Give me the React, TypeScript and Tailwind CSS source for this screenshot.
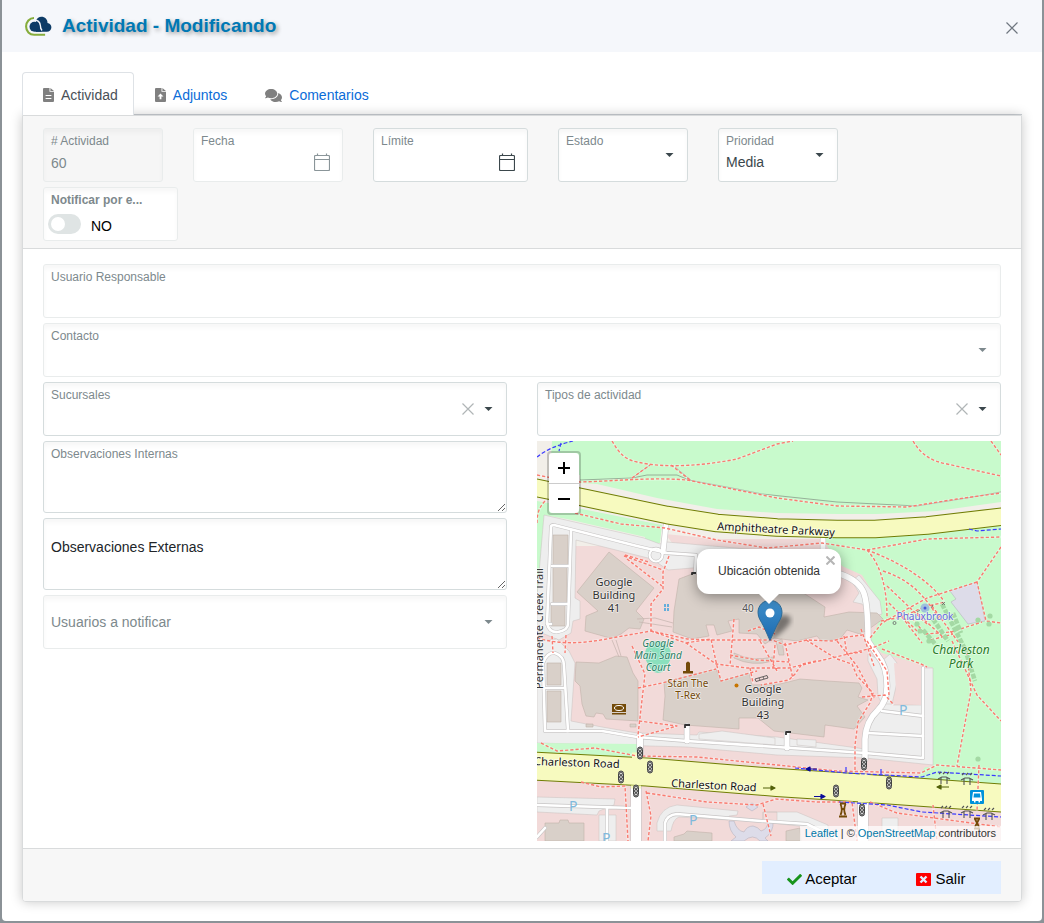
import type { ReactNode } from "react";
import { FaCheck, FaComments } from "react-icons/fa";

const labelText = "text-xs leading-4 text-[#7d898d]";

function Caret({ muted = false }: { muted?: boolean }) {
  return (
    <svg
      aria-hidden="true"
      viewBox="0 0 9 5"
      className={`pointer-events-none absolute top-1/2 right-[13px] h-[5px] w-[9px] -translate-y-1/2 ${muted ? "text-[#7d898d]" : "text-[#3b474c]"}`}
    >
      <path d="M0.5 0.5h8l-4 4z" fill="currentColor" />
    </svg>
  );
}

type BoxProps = { children: ReactNode; className?: string; soft?: boolean; disabled?: boolean };

function Box({ children, className = "h-[54px]", soft = false, disabled = false }: BoxProps) {
  return (
    <div
      className={`relative flex flex-col overflow-hidden rounded-[3px] border px-[7px] pt-1 shadow-[inset_0_4px_4px_rgba(0,0,0,0.03)] ${
        soft ? "border-[#e9ecec]" : "border-[#d5dcdd]"
      } ${disabled ? "bg-[#f6f6f6]" : "bg-white"} ${className}`}
    >
      {children}
    </div>
  );
}

function CalendarIcon() {
  return (
    <svg aria-hidden="true" viewBox="0 0 16 18" className="h-[18px] w-4" fill="none" stroke="currentColor" strokeWidth="1.200">
      <path d="M1.5 2.5h13a1 1 0 0 1 1 1v13a1 1 0 0 1-1 1h-13a1 1 0 0 1-1-1v-13a1 1 0 0 1 1-1zM0.5 6.5h15M3.5 0.5v2M12.5 0.5v2" />
    </svg>
  );
}

function DateField({ id, label, className, soft = false }: { id: string; label: string; className: string; soft?: boolean }) {
  return (
    <Box className={`h-[54px] ${className}`} soft={soft}>
      <label htmlFor={id} className={labelText}>{label}</label>
      <div className="flex h-[26px] items-center justify-between pr-[5px]">
        <input id={id} type="text" className="w-0 flex-1 text-sm text-[#3b474c] outline-none" />
        <button type="button" aria-label={`Abrir calendario: ${label}`} className={soft ? "text-[#8a9599]" : "text-[#3b474c]"}>
          <CalendarIcon />
        </button>
      </div>
    </Box>
  );
}

type SelectProps = { id: string; label: string; value?: string; className?: string; soft?: boolean; clearable?: boolean };

function SelectField({ id, label, value = "", className = "", soft = false, clearable = false }: SelectProps) {
  return (
    <Box className={`h-[54px] ${className}`} soft={soft}>
      <label htmlFor={id} className={labelText}>{label}</label>
      <select id={id} defaultValue={value} className="h-[26px] w-full appearance-none text-sm text-[#3b474c] outline-none">
        <option value={value}>{value}</option>
      </select>
      {clearable && (
        <button type="button" aria-label={`Limpiar ${label}`} className="absolute top-1/2 right-8 -translate-y-1/2 text-[#b0b5b7]">
          <svg aria-hidden="true" viewBox="0 0 12 12" className="size-3" stroke="currentColor" strokeWidth="1.2">
            <path d="M0.5 0.5l11 11M11.5 0.5l-11 11" />
          </svg>
        </button>
      )}
      <Caret muted={soft} />
    </Box>
  );
}

function Logo() {
  return (
    <svg aria-hidden="true" viewBox="0 0 27 20" className="h-5 w-[27px]">
      <path d="M9 2C4.500 2 1.100 5.800 1.100 10.500c0 5 3.500 8.300 8 8.300h11" fill="none" stroke="#86ad3c" strokeWidth="2.100" />
      <path d="M11 4.500C12 2.200 14 0.800 16.400 0.800c3.600 0 6.200 2.700 6.100 6.100 2.400.3 3.900 2 3.900 4.300 0 2.700-2 4.600-4.600 4.600H11z" fill="#0d3b66" />
      <path d="M8.500 4.400Q15 3.800 15.300 9.500Q15.500 13 17 14.500" fill="none" stroke="#f5f7fb" strokeWidth="1.500" />
      <circle cx="9.500" cy="10.800" r="5" fill="#0d3b66" />
      <path d="M10 15.800h6.500l-2.500-4z" fill="#0d3b66" />
    </svg>
  );
}

function FileIcon({ upload = false }: { upload?: boolean }) {
  return (
    <svg aria-hidden="true" viewBox="0 0 11 14" className="h-3.5 w-[11px]">
      <path d="M1 0h5.500v3.800H11V13a1 1 0 0 1-1 1H1a1 1 0 0 1-1-1V1a1 1 0 0 1 1-1zM7.400 0L11 3.100H7.400z" fill="#808080" />
      {upload ? (
        <path d="M5.500 5.500L2.500 8.600h2.100v2.700h1.800V8.600h2.100z" fill="#fff" />
      ) : (
        <path d="M2.600 7.500h5.800M2.600 10.500h5.800" stroke="#fff" />
      )}
    </svg>
  );
}

const footpaths = [
  "M75 0C80 8 85 18 100 21C130 28 170 24 200 18L240 3L256 0",
  "M376 0C385 15 395 20 410 23L464 35",
  "M454 0L464 14",
  "M0 34L20 38L43 41C80 40 115 36 150 39L200 49L240 57L300 65L370 66L420 58L464 52",
  "M95 37L113 24M134 24L153 39",
  "M8 60C2 66 0 73 0 82",
  "M38 72L84 83L128 87L180 99L230 107L285 102L330 109L390 98L464 96",
  "M330 109C345 125 350 150 350 176M330 109C360 120 390 137 407 160",
  "M346 130C370 138 385 150 402 178M350 145L390 183M352 162L382 192",
  "M464 106L440 141L449 180L464 182M440 141L390 157L345 182L333 197",
  "M87 115L126 129M90 118L125 145M88 114L112 121M132 115L126 131L126 148L114 163L114 190",
  "M0 197C30 206 60 200 80 196L114 190L150 198L174 199L205 199L235 199L248 204L270 199L295 200L310 196L325 194",
  "M114 190L149 202L179 223L210 227L252 227L295 217L335 207L352 200M149 202L174 198L180 225L184 240L220 230",
  "M197 178L193 225M193 214L220 219L252 221M238 204L236 227M248 202L256 238M213 227L216 242",
  "M269 199L300 218L315 223L320 235L336 252L333 262L321 281L318 304L318 330",
  "M95 205L108 233L101 294M101 247L125 242L179 228",
  "M102 280L140 285L101 296M4 302L20 310L58 307L100 315L160 316L230 323L300 330L384 332L400 324L464 329",
  "M15 195L16 212M29 194L28 212",
  "M44 341L64 346L88 345L91 400M109 350L114 375L111 400M110 352L170 361L220 364L239 358L280 361L315 361L320 400",
  "M344 180L365 176L387 166L408 161M365 176L385 202M380 172L408 198M395 165L430 213L434 250L420 325",
  "M330 200L350 230L352 254M300 200L320 225L337 257M325 256L348 254L357 264",
  "M375 177L388 193L414 191L445 181M394 199L416 193",
  "M345 208L384 223L390 226M415 200L440 254L464 280",
  "M442 324L440 370M396 364L400 400M333 361L360 372L464 386M226 363L234 395",
  "M211 190L222 186L238 193",
  "M223 200L240 230L240 227M279 220L265 223L258 233L252 239L224 244",
  "M307 195L310 213L325 211M324 188L330 205L337 225",
];

const buildings = [
  "M72 111L117 147L99 170L107 178L103 188L92 187L84 193L78 196L73 197L48 190L49 175L61 170L40 151Z",
  "M142 138L155 133L240 140L268 153L288 166L287 176L312 171L340 172L346 178L332 188L323 193L310 189L303 198L284 200L280 195L260 200L237 197L228 203L220 193L202 192L202 178L191 180L195 190L180 194L177 184L169 184L172 195L155 198L136 191L137 170Z",
  "M127 241L179 228L184 240L212 232L215 244L243 243L263 238L290 240L322 242L325 247L321 256L331 259L320 265L328 276L317 288L288 284L287 296L237 290L221 277L202 277L202 288L148 284L126 279L128 255Z",
  "M39 221L62 222L79 215L90 216L96 232L101 240L101 280L69 278L66 273L59 272L57 276L49 275L45 263L43 245L38 240Z",
  "M8 382L22 382L23 379L31 379L32 382L47 382L47 400L8 400Z",
  "M137 400V396L147 393L150 390L175 392V400Z",
  "M16 94H31V124H16ZM16 126H30V162H16ZM14 164H28V185H14Z",
  "M10 222H24V244H10ZM10 250H24V281H10Z",
  "M249 390L263 387L264 400H249ZM197 212Q215 221 236 216V220Q215 226 197 217Z",
  "M239 200L242 214H247L245 198Z",
  "M49 283H56V286H49ZM93 283H99V286H93Z",
];

const serviceRoads = [
  "M14 183L10 183L14 86Q14 84 17 84L100 105L130 112L159 114L158 132",
  "M10 182Q12 192 21 191Q31 189 31 183L34 90",
  "M15 125H32M15 163H31",
  "M8 290L6 222Q10 211 18 212Q27 215 27 225L31 290L8 290M7 247H27",
  "M30 290L65 290L100 296L150 300L240 306L328 312L386 317V227",
  "M331 292L386 295M345 270L386 275",
  "M0 364L95 367M70 367V400M128 400V382Q130 374 140 373L224 380L270 383L300 398",
  "M0 396L8 387",
];

const treeRows = "M386 189L399 204M396 178L411 200M405 163L428 208M428 208L438 240M416 172L424 192";

const trees: [number, number][] = [
  [441, 179], [453, 175], [452, 183], [441, 318], [380, 183], [383, 190], [392, 200],
];

const signals: [number, number][] = [
  [103, 312], [113, 326], [84, 336], [99, 350], [327, 323], [299, 350], [352, 342], [325, 369],
];

const shelters: [number, number][] = [
  [407, 338], [430, 339], [409, 372], [430, 372], [452, 374],
];

function Halo({ x, y, size = 11, fill = "#333", children, transform, italic = false, start = false }: {
  x: number; y: number; size?: number; fill?: string; children: ReactNode; transform?: string; italic?: boolean; start?: boolean;
}) {
  return (
    <text
      x={x}
      y={y}
      fontSize={size}
      fill={fill}
      stroke="#fff"
      strokeOpacity="0.6"
      strokeWidth="1.600"
      paintOrder="stroke"
      textAnchor={start ? "start" : "middle"}
      fontStyle={italic ? "italic" : "normal"}
      transform={transform}
    >
      {children}
    </text>
  );
}

function MapDrawing() {
  return (
    <svg
      role="img"
      aria-label="Mapa de la ubicación"
      viewBox="0 0 464 400"
      preserveAspectRatio="xMidYMid slice"
      className="h-full w-full font-['Noto_Sans',sans-serif]"
      strokeLinejoin="round"
    >
      <rect width="464" height="400" fill="#f2dad9" />
      <path d="M0 0H464V105H0Z" fill="#f2efe9" />
      <path d="M15 0H464V61L400 70L340 73L300 73L240 72L180 68L120 57L60 43L43 42V34L12 34L14 16Z" fill="#c8facc" />
      <path d="M0 60L45 68L125 84L123 102L108 102V96L30 78L7 74L6 120L0 155Z" fill="#c8facc" />
      <path d="M128 93L180 98L290 98V120H150Z" fill="#f2dad9" />
      <path d="M287 96L464 84V346L396 338V227L345 212L333 199L344 176L343 163L325 134L305 125L290 105Z" fill="#c8facc" />
      <path d="M388 326L464 334V343L380 337Z" fill="#c8facc" />

      <g fill="#eee" stroke="#c8c0be" strokeWidth="0.500">
        <path d="M7 74L107 97L123 103L130 101L232 110V118L168 118V126L155 127L131 129L115 118L39 99L38 157L43 160V178L36 180L34 192L22 199L0 190V155Z" />
        <path d="M0 200L20 198L32 210L38 222L34 280L65 286L100 292L160 294L162 291L240 296L328 308L330 282L346 265L352 252L357 264L384 264V227H396V324L328 317L240 314L150 306L0 302Z" />
        <path d="M322 134L343 160L345 173L333 176L330 170L325 163L316 161L322 152L315 140Z" />
        <path d="M331 213L345 220L353 213L360 222L361 237L355 263L345 263L341 255L340 238L331 220Z" />
        <path d="M0 356L78 358L77 364L62 370L60 374L0 371ZM62 374H79V400H62ZM120 382Q124 366 140 364L201 370L200 374L192 375L191 379L142 376Q136 378 134 390H120ZM226 371L260 371L291 384V398L270 386L226 381ZM345 377H361V400H345ZM226 371V380H240V371Z" />
        <path d="M185 290L162 293V298L238 304V297ZM260 298L279 299V306L260 304Z" />
      </g>
      <path d="M0 302L100 303V317L0 312Z" fill="#c8facc" />
      <path d="M357 222L384 225V264L360 262Z" fill="#f2dad9" />
      <g fill="#d9d0c9" stroke="#c1b2a9" strokeWidth="0.600">
        {buildings.map((d) => <path key={d} d={d} />)}
      </g>
      <g fill="#dddce9" stroke="#b7b3c0" strokeWidth="0.600">
        <path d="M413 150L440 141L448 180L431 183L414 161L419 158Z" />
        <path d="M192 380H197Q200 390 207 391Q210 385 216 385Q221 386 224 390Q231 388 231 380H236Q237 391 228 397L231 400H223Q216 392 207 400H194L199 396Q192 390 192 380Z" />
        <path d="M209 366L215 362L221 366L215 370Z" />
      </g>
      <ellipse cx="121" cy="214" rx="13" ry="14" fill="#8ae0bd" />
      <circle cx="121" cy="223" r="9" fill="#8ae0bd" />

      {[{ stroke: "#c7c5c5", add: 1.2 }, { stroke: "#fff", add: 0 }].map(({ stroke, add }) => (
        <g key={stroke} fill="none" stroke={stroke} strokeLinecap="round">
          {serviceRoads.map((d) => <path key={d} d={d} strokeWidth={2.600 + add} />)}
          <circle cx="119" cy="114" r="6.500" strokeWidth={2.200 + add} />
          <path d="M129 84L126 111M286 98V125M150 285V300M250 292V307" strokeWidth={5 + add} />
          <path d="M300 132Q320 138 326 150Q331 160 331 200L341 215Q350 225 350 245Q350 260 341 269Q329 280 328 298V318" strokeWidth={5.500 + add} />
          <path d="M103 295V315" strokeWidth={6 + add} />
          <path d="M99 345V402M326 355V402" strokeWidth={10 + add} />
        </g>
      ))}

      <g fill="none" stroke="#8a9d8b" strokeWidth="0.800">
        <path d="M43 39L95 37L113 24M95 37L110 34L140 34L152 39L200 48L225 53L300 61L380 65L430 57L464 51M138 26L155 40" />
        <path d="M100 178L118 177L136 182M102 181L135 186M75 199L82 216M79 199L84 215" stroke="#c9b8b3" />
      </g>

      <g fill="none" strokeLinejoin="round">
        <path d="M-5 46L44 56L130 74L180 82L240 86.500L300 88L338 88L390 84.500L470 75" stroke="#707d05" strokeWidth="18.500" />
        <path d="M-5 46L44 56L130 74L180 82L240 86.500L300 88L338 88L390 84.500L470 75" stroke="#f7fabf" strokeWidth="16.500" />
        <path d="M-5 325L110 331L240 341.500L310 346L470 357.500" stroke="#707d05" strokeWidth="29" />
        <path d="M-5 325L110 331L240 341.500L310 346L470 357.500" stroke="#f7fabf" strokeWidth="27" />
        <path d="M99 311.500V318M327 333V340" stroke="#f7fabf" strokeWidth="8" />
      </g>
      <path d="M94 346H104M321 360H332" stroke="#f7fabf" strokeWidth="3" />

      <g fill="none" stroke="#fff" strokeOpacity="0.350" strokeWidth="2.600">
        {footpaths.map((d) => <path key={d} d={d} />)}
      </g>
      <g fill="none" stroke="#fa7b70" strokeWidth="1.400" strokeDasharray="3.200 2">
        {footpaths.map((d) => <path key={d} d={d} />)}
      </g>
      <g fill="none" stroke="#3a3aff" strokeWidth="1.200" strokeDasharray="4 2">
        <path d="M0 16Q12 6 36 0M24 2L22 10M432 88L440 90L464 88" />
        <path d="M258 327L310 332L385 336L400 331L464 335M302 361L350 364L385 371L464 376" />
        <path d="M309 326V331M344 328V333" strokeDasharray="none" />
      </g>

      <path d={treeRows} fill="none" stroke="#a4d9a4" strokeWidth="4.500" strokeDasharray="5 1.500" />
      <g fill="#a4d9a4">
        {trees.map(([x, y]) => <circle key={`${x}-${y}`} cx={x} cy={y} r="2.600" />)}
      </g>
      <circle cx="388" cy="167" r="4.500" fill="#9fbfdc" />
      <circle cx="388" cy="167" r="1.500" fill="#4456d8" />
      <g fill="none" stroke="#666" strokeWidth="0.800">
        <path d="M380 171l3-2M394 167l2-3M405 161l3 3M405 164l3-3M356 182a1.500 1.500 0 1 0 3 0a1.500 1.500 0 1 0-3 0" />
        <path d="M218 238L230 234.500L231 237L219 240.500ZM222 237l1 2M226 236l1 2" stroke="#444" />
      </g>

      <g fill="#d6d6d6" stroke="#444" strokeWidth="1">
        {signals.map(([x, y]) => (
          <g key={`${x}-${y}`}>
            <rect x={x - 2.500} y={y - 6} width="5" height="12" rx="2.500" />
            <circle cx={x} cy={y - 3.500} r="1.500" />
            <circle cx={x} cy={y} r="1.500" />
            <circle cx={x} cy={y + 3.500} r="1.500" />
          </g>
        ))}
      </g>
      <g fill="none" stroke="#555" strokeWidth="1.100">
        {shelters.map(([x, y]) => (
          <path key={`${x}-${y}`} d={`M${x - 6} ${y}L${x - 2} ${y - 2}H${x + 2}L${x + 6} ${y}M${x - 3} ${y - 1}V${y + 5}M${x + 3} ${y - 1}V${y + 5}M${x - 5} ${y - 5}l2 -2M${x - 1} ${y - 5}l2 -2M${x + 3} ${y - 5}l2 -2`} />
        ))}
      </g>

      <g strokeWidth="1.200">
        <path d="M226 347H237M234 345L238 347L234 349Z" stroke="#53610a" fill="#53610a" />
        <path d="M401 346H412M404 344L400 346L404 348Z" stroke="#53610a" fill="#53610a" />
        <path d="M270 328H280M273 326L269 328L273 330Z" stroke="#0a0a99" fill="#0a0a99" />
        <path d="M277 355.500H288M284 353.500L288 355.500L284 357.500Z" stroke="#0a0a99" fill="#0a0a99" />
        <path d="M155 134V132H159M148 287V284H153M249 294V291H254" stroke="#333" strokeWidth="1.800" fill="none" />
      </g>

      <g fill="#734a08">
        <path d="M149 222Q151 219 153 222V230H156V232.500H146V230H149Z" />
        <path d="M75 263H89V271H75ZM75 272H89V273.500H75Z" />
      </g>
      <ellipse cx="82" cy="267" rx="4.500" ry="2.500" fill="none" stroke="#fff" />
      <g fill="none" stroke="#734a08" strokeWidth="1.100">
        <path d="M303 362.500H309M303.500 363Q306 369 303.500 374M308.500 363Q306 369 308.500 374M302 375.500H310M304 368H308" strokeWidth="1.800" />
        <path d="M437 377.500H443M438 378L442 386M442 378L438 386M437 387.500H443" strokeWidth="1.800" />
      </g>
      <circle cx="199.500" cy="244.500" r="2" fill="#c77400" />
      <path d="M127 163h2v3h-2zM130 163h2v3h-2zM127 167h2v3h-2zM130 167h2v3h-2z" fill="#65aedb" />

      <rect x="433" y="349" width="14" height="14" rx="1" fill="#0092da" />
      <path d="M436 351H444L445 358V360H443V361.500H441.500V360H438.500V361.500H437V360H435V358Z" fill="#fff" />
      <path d="M437 352.500H443L443.500 356.500H436.500Z" fill="#0092da" />

      <Halo x={77} y={145}>Google</Halo>
      <Halo x={77} y={158}>Building</Halo>
      <Halo x={77} y={171}>41</Halo>
      <Halo x={226} y={252}>Google</Halo>
      <Halo x={226} y={265}>Building</Halo>
      <Halo x={226} y={278}>43</Halo>
      <Halo x={211} y={171} size={10} fill="#555">40</Halo>
      <Halo x={121} y={206} size={10} fill="#2a8064" italic>Google</Halo>
      <Halo x={121} y={218} size={10} fill="#2a8064" italic>Main Sand</Halo>
      <Halo x={121} y={230} size={10} fill="#2a8064" italic>Court</Halo>
      <Halo x={151} y={246} size={10} fill="#734a08">Stan The</Halo>
      <Halo x={151} y={258} size={10} fill="#734a08">T-Rex</Halo>
      <Halo x={388} y={179} size={10} fill="#6668dc">Phauxbrook</Halo>
      <Halo x={424} y={213} size={12} fill="#277c27" italic>Charleston</Halo>
      <Halo x={424} y={227} size={12} fill="#277c27" italic>Park</Halo>
      <Halo x={180} y={89} fill="#111" start transform="rotate(3 180 89)">Amphitheatre Parkway</Halo>
      <Halo x={-3} y={324} fill="#111" start transform="rotate(2 -3 324)">Charleston Road</Halo>
      <Halo x={134} y={346} fill="#111" start transform="rotate(3 134 346)">Charleston Road</Halo>
      <Halo x={6} y={248} start transform="rotate(-90 6 248)">Permanente Creek Trail</Halo>
      <g fontSize="14" fill="#7fb9dc">
        <text x="32" y="370">P</text>
        <text x="65" y="402">P</text>
        <text x="152" y="384">P</text>
        <text x="362" y="274">P</text>
      </g>
    </svg>
  );
}

function LocationMap() {
  return (
    <div className="relative h-[400px] overflow-hidden">
      <MapDrawing />
      <div className="absolute top-2.5 left-2.5 flex w-[34px] flex-col rounded border-2 border-black/20 bg-clip-padding text-black">
        <button type="button" aria-label="Acercar" className="flex h-[31px] items-center justify-center rounded-t-sm border-b border-[#ccc] bg-white">
          <svg aria-hidden="true" viewBox="0 0 12 12" className="size-3" stroke="currentColor" strokeWidth="2"><path d="M0 6h12M6 0v12" /></svg>
        </button>
        <button type="button" aria-label="Alejar" className="flex h-[29px] items-center justify-center rounded-b-sm bg-white">
          <svg aria-hidden="true" viewBox="0 0 12 12" className="size-3" stroke="currentColor" strokeWidth="2"><path d="M0 6h12" /></svg>
        </button>
      </div>
      <svg aria-hidden="true" viewBox="0 0 55 43" className="absolute top-[159px] left-1/2 h-[43px] w-[55px] -translate-x-3">
        <defs>
          <linearGradient id="pin" x1="0" y1="0" x2="0" y2="1">
            <stop offset="0" stopColor="#3f8fca" />
            <stop offset="1" stopColor="#1c6ab0" />
          </linearGradient>
          <filter id="soften"><feGaussianBlur stdDeviation="2.500" /></filter>
        </defs>
        <path d="M13 41L20 17Q32 12 34 20Q33 27 13 41Z" fill="#000" opacity="0.450" filter="url(#soften)" />
        <path d="M13 0.500C6 0.500 1 5.500 1 12.500C1 18 4 21 6.500 26L13 40.500L19.500 26C22 21 25 18 25 12.500C25 5.500 20 0.500 13 0.500Z" fill="url(#pin)" stroke="#2e6c97" />
        <circle cx="13" cy="13" r="4.500" fill="#fff" />
      </svg>
      <div className="absolute top-[108px] left-1/2 flex h-[45px] -translate-x-1/2 items-center rounded-xl bg-white pr-[21px] pb-px pl-[21px] text-xs whitespace-nowrap text-[#333] shadow-[0_3px_14px_rgba(0,0,0,0.4)]">
        Ubicación obtenida
        <button type="button" aria-label="Cerrar aviso" className="absolute top-[7px] right-1.5 text-[#b5b5b5]">
          <svg aria-hidden="true" viewBox="0 0 9 9" className="block size-[9px]" stroke="currentColor" strokeWidth="2"><path d="M0.500 0.500l8 8M8.500 0.500l-8 8" /></svg>
        </button>
      </div>
      <svg aria-hidden="true" viewBox="0 0 22 11" className="absolute top-[152px] left-1/2 h-[11px] w-[22px] -translate-x-1/2"><path d="M0 0H22L11 11Z" fill="#fff" /></svg>
      <p className="absolute right-0 bottom-0 bg-white/70 px-[5px] text-[11px] leading-[15px] text-[#333]">
        <a href="#leaflet" className="text-[#0078a8]">Leaflet</a> | © <a href="#osm" className="text-[#0078a8]">OpenStreetMap</a> contributors
      </p>
    </div>
  );
}

export default function App() {
  return (
    <div className="min-h-screen bg-[#8b9297] px-0.5 font-['Liberation_Sans',Arial,sans-serif]">
      <main className="rounded-b-sm bg-white">
        <header className="flex h-[52px] items-center justify-between bg-[#f5f7fb] pr-6 pl-[23px]">
          <div className="flex items-center gap-2.5">
            <Logo />
            <h1 className="text-[19px] leading-7 font-bold text-[#0078b4] [text-shadow:2px_2px_4px_#999]">Actividad - Modificando</h1>
          </div>
          <button type="button" aria-label="Cerrar" className="pt-1 text-[#6f7780]">
            <svg aria-hidden="true" viewBox="0 0 12 12" className="size-3" stroke="currentColor" strokeWidth="1.200"><path d="M0.500 0.500l11 11M11.500 0.500l-11 11" /></svg>
          </button>
        </header>

        <div className="px-5 pt-5 pb-[19px]">
          <nav className="flex h-[43px] border-b border-[#ccd1d6] text-sm">
            <a href="#actividad" className="-mb-px flex items-center gap-[7px] rounded-t border border-b-0 border-[#dee2e6] bg-white pr-[15px] pl-5 pt-0.5 text-[#495057]">
              <FileIcon />Actividad
            </a>
            <a href="#adjuntos" className="flex items-center gap-[7px] px-[21px] pt-1 text-[#0b6cd8]">
              <FileIcon upload />Adjuntos
            </a>
            <a href="#comentarios" className="flex items-center gap-[7px] pt-1 pl-[17px] text-[#0b6cd8]">
              <FaComments aria-hidden="true" className="size-[17px] text-[#808080]" />Comentarios
            </a>
          </nav>

          <form className="overflow-hidden rounded-b border border-[#d9dbdc] bg-white shadow-[0_0_12px_rgba(0,0,0,0.22)]">
            <div className="flex flex-wrap gap-x-[30px] gap-y-[5px] border-b border-[#d9dbdc] bg-[#f7f7f7] px-5 pt-3 pb-[7px]">
              <Box className="h-[54px] w-[120px]" soft disabled>
                <label htmlFor="numero" className={labelText}>&#35; Actividad</label>
                <input id="numero" disabled defaultValue="60" className="h-7 w-full text-sm text-[#7d898d]" />
              </Box>
              <DateField id="fecha" label="Fecha" className="w-[150px]" soft />
              <DateField id="limite" label="Límite" className="w-[155px]" />
              <SelectField id="estado" label="Estado" className="w-[130px]" />
              <SelectField id="prioridad" label="Prioridad" value="Media" className="w-[120px]" />
              <Box className="h-[54px] w-[135px]" soft>
                <label htmlFor="notificar" className="text-xs leading-4 font-bold text-[#7d898d]">Notificar por e...</label>
                <div className="-ml-[3px] flex items-start gap-2.5 pt-1.5">
                  <input
                    id="notificar"
                    type="checkbox"
                    role="switch"
                    className="h-5 w-[33px] appearance-none rounded-full bg-[#dfe4e4] p-[3px] before:block before:size-3.5 before:rounded-full before:bg-white checked:bg-[#0078b4] checked:before:ml-auto"
                  />
                  <span className="pt-0.5 text-sm text-black">NO</span>
                </div>
              </Box>
            </div>

            <div className="grid grid-cols-2 gap-x-[30px] gap-y-[5px] px-5 pt-[15px] pb-[7px]">
              <div className="col-span-2">
                <Box soft>
                  <label htmlFor="responsable" className={labelText}>Usuario Responsable</label>
                  <input id="responsable" type="text" className="h-[26px] w-full text-sm text-[#3b474c] outline-none" />
                </Box>
              </div>
              <div className="col-span-2">
                <SelectField id="contacto" label="Contacto" soft />
              </div>
              <SelectField id="sucursales" label="Sucursales" clearable />
              <SelectField id="tipos" label="Tipos de actividad" clearable />
              <div className="flex flex-col gap-[5px]">
                <Box className="h-[72px]">
                  <label htmlFor="internas" className={labelText}>Observaciones Internas</label>
                  <textarea id="internas" className="-mr-[7px] min-h-0 flex-1 resize text-sm text-[#3b474c] outline-none" />
                </Box>
                <Box className="h-[72px]">
                  <label htmlFor="externas" className="pt-3.5 text-sm leading-5 text-[#212529]">Observaciones Externas</label>
                  <textarea id="externas" className="-mr-[7px] min-h-0 flex-1 resize text-sm text-[#3b474c] outline-none" />
                </Box>
                <Box className="h-[54px] pb-1" soft>
                  <select aria-label="Usuarios a notificar" className="h-full w-full appearance-none text-sm text-[#7d898d] outline-none">
                    <option>Usuarios a notificar</option>
                  </select>
                  <Caret muted />
                </Box>
              </div>
              <LocationMap />
            </div>

            <footer className="flex justify-end border-t border-[#d9dbdc] bg-[#f7f7f7] px-5 pt-3 pb-[7px]">
              <div className="flex h-[33px] bg-[#e2eeff] text-[15px] text-black">
                <button type="button" className="flex w-[120px] items-center justify-center gap-[3px] pt-[3px]">
                  <FaCheck aria-hidden="true" className="size-[15px] text-[#17941c]" />Aceptar
                </button>
                <button type="button" className="flex w-[119px] items-center justify-center gap-1 pt-[3px] pr-px">
                  <svg aria-hidden="true" viewBox="0 0 15 13" className="h-[13px] w-[15px]">
                    <rect width="15" height="13" rx="1" fill="#f00" />
                    <path d="M4.500 3.500l6 6M10.500 3.500l-6 6" stroke="#e2eeff" strokeWidth="2.400" />
                  </svg>
                  Salir
                </button>
              </div>
            </footer>
          </form>
        </div>
      </main>
    </div>
  );
}
